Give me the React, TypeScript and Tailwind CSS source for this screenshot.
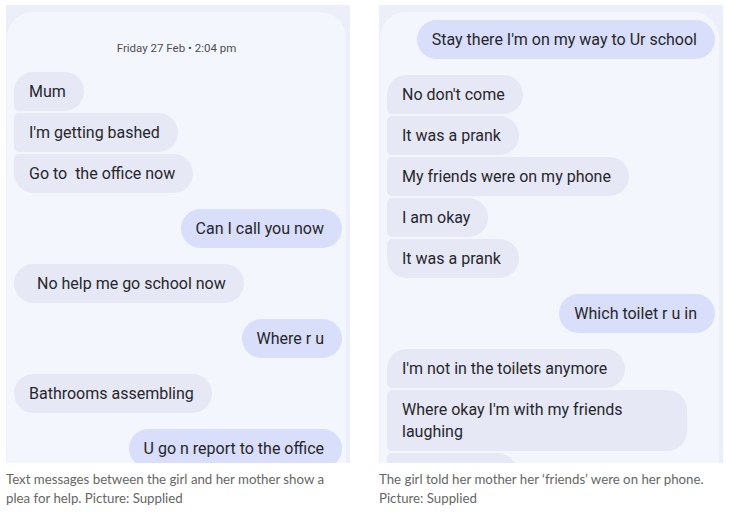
import React from 'react';

type Msg = { text: string; me?: boolean; pos?: 'first' | 'mid' | 'last' | 'single'; gap?: number; lead?: boolean; w?: boolean };

const bubbleFont = { fontFamily: 'Roboto, "Noto Sans", sans-serif' };

function Bubble({ m }: { m: Msg }) {
  const corners = m.me
    ? 'rounded-[20px]'
    : m.pos === 'first'
      ? 'rounded-r-[20px] rounded-tl-[20px] rounded-bl-[5px]'
      : m.pos === 'mid'
        ? 'rounded-r-[20px] rounded-l-[5px]'
        : m.pos === 'last'
          ? 'rounded-r-[20px] rounded-tl-[5px] rounded-bl-[20px]'
          : 'rounded-[20px]';
  const gap = m.gap === 0 ? 'mt-0' : m.gap === 2 ? 'mt-[2px]' : 'mt-[16px]';
  return (
    <div className={`flex ${m.me ? 'justify-end pr-[4px]' : 'justify-start pl-[7px]'} ${gap}`}>
      <div
        className={`${corners} ${m.me ? 'bg-[#d9defa]' : 'bg-[#e6e8f6]'} ${m.lead ? 'pl-[23px]' : 'pl-[15px]'} ${m.w ? 'w-[130px]' : ''} pr-[18px] py-[8.5px] text-[16px] leading-[22px] text-[#26272c] max-w-[300px] whitespace-pre-wrap`}
        style={bubbleFont}
      >
        {m.text}
      </div>
    </div>
  );
}

function Phone({ children, top }: { children: React.ReactNode; top: string }) {
  return (
    <div className="h-[458px] w-[344px] bg-[#eceefa] overflow-hidden pt-[7px] pl-[1px] pr-[4px]">
      <div className={`h-full bg-[#f4f6fd] rounded-t-[26px] ${top}`}>{children}</div>
    </div>
  );
}

const captionFont = { fontFamily: 'Lato, "Open Sans", sans-serif' };

export default function App() {
  const left: Msg[] = [
    { text: 'Mum', pos: 'first', gap: 0 },
    { text: "I'm getting bashed", pos: 'mid', gap: 2 },
    { text: 'Go to  the office now', pos: 'last', gap: 2 },
    { text: 'Can I call you now', me: true },
    { text: 'No help me go school now', lead: true },
    { text: 'Where r u', me: true },
    { text: 'Bathrooms assembling' },
    { text: 'U go n report to the office', me: true },
  ];
  const right: Msg[] = [
    { text: "Stay there I'm on my way to Ur school", me: true, gap: 0 },
    { text: "No don't come", pos: 'first' },
    { text: 'It was a prank', pos: 'mid', gap: 2 },
    { text: 'My friends were on my phone', pos: 'mid', gap: 2 },
    { text: 'I am okay', pos: 'mid', gap: 2 },
    { text: 'It was a prank', pos: 'last', gap: 2 },
    { text: 'Which toilet r u in', me: true },
    { text: "I'm not in the toilets anymore", pos: 'first' },
    { text: "Where okay I'm with my friends laughing", pos: 'mid', gap: 2 },
    { text: '\u00a0', pos: 'mid', gap: 2, w: true },
  ];

  return (
    <div className="w-[729px] h-[516px] bg-white flex gap-[29px] pl-[6px] pt-[5px]">
      <div className="flex flex-col">
        <Phone top="pt-[29px]">
          <div className="text-center text-[11.5px] text-[#4d4f57] leading-[14px] mb-[17px]" style={bubbleFont}>
            Friday 27 Feb • 2:04 pm
          </div>
          <div className="flex flex-col">
            {left.map((m, i) => (
              <Bubble key={i} m={m} />
            ))}
          </div>
        </Phone>
        <p className="mt-[7px] text-[13.25px] leading-[19px] text-[#666] w-[344px]" style={captionFont}>
          Text messages between the girl and her mother show a plea for help. Picture: Supplied
        </p>
      </div>
      <div className="flex flex-col">
        <Phone top="pt-[8px]">
          <div className="flex flex-col">
            {right.map((m, i) => (
              <Bubble key={i} m={m} />
            ))}
          </div>
        </Phone>
        <p className="mt-[7px] text-[13.25px] leading-[19px] text-[#666] w-[344px]" style={captionFont}>
          The girl told her mother her ‘friends’ were on her phone. Picture: Supplied
        </p>
      </div>
    </div>
  );
}
